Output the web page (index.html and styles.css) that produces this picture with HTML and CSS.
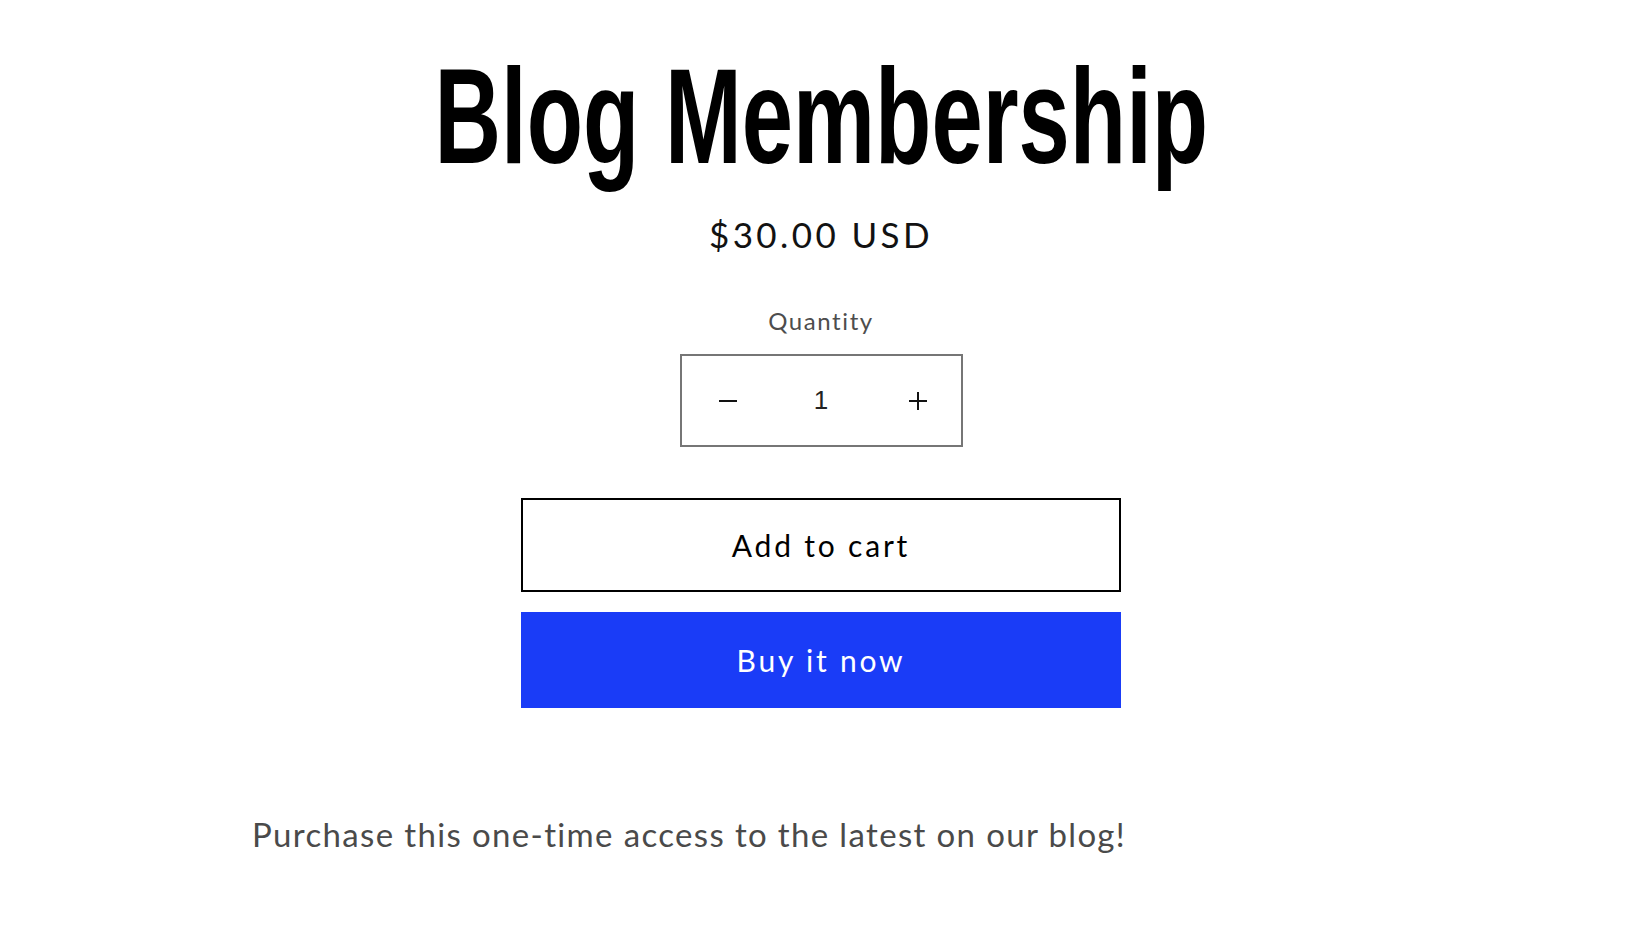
FILE: index.html
```html
<!DOCTYPE html>
<html lang="en">
<head>
<meta charset="utf-8">
<title>Blog Membership</title>
<link rel="stylesheet" href="styles.css">
</head>
<body>
<main class="page">
  <section class="product">
    <h1 class="product-title">Blog Membership</h1>
    <p class="price">$30.00 USD</p>
    <label class="qty-label" for="qty">Quantity</label>
    <div class="qty">
      <button class="qty-btn" type="button" aria-label="Decrease quantity">
        <svg width="18" height="18" viewBox="0 0 18 18"><path d="M0 9h18" stroke="#121212" stroke-width="2"/></svg>
      </button>
      <input class="qty-input" id="qty" type="text" value="1">
      <button class="qty-btn" type="button" aria-label="Increase quantity">
        <svg width="18" height="18" viewBox="0 0 18 18"><path d="M0 9h18M9 0v18" stroke="#121212" stroke-width="2"/></svg>
      </button>
    </div>
    <button class="btn btn-outline" type="button">Add to cart</button>
    <button class="btn btn-solid" type="button">Buy it now</button>
  </section>
  <p class="description">Purchase this one-time access to the latest on our blog!</p>
</main>
</body>
</html>
```

FILE: styles.css
```css
html, body {
  margin: 0;
  padding: 0;
  background: #ffffff;
}

body {
  font-family: Lato, "Open Sans", sans-serif;
  color: #121212;
}

.page {
  padding: 49px 236px 0 252px;
}

.product {
  display: flex;
  flex-direction: column;
  align-items: center;
}

.product-title {
  margin: 0;
  font-family: "Liberation Sans Narrow", "Liberation Sans", Arial, sans-serif;
  font-weight: 700;
  font-size: 135px;
  line-height: 135px;
  color: #000;
  transform: scaleX(0.683);
  white-space: nowrap;
}

.price {
  margin: 29px 0 0;
  font-size: 35px;
  line-height: 42px;
  letter-spacing: 3.4px;
  color: #121212;
}

.qty-label {
  margin-top: 51px;
  font-size: 24px;
  line-height: 29px;
  letter-spacing: 1.6px;
  color: #4d4d4d;
}

.qty {
  margin-top: 19px;
  width: 283px;
  height: 93px;
  box-sizing: border-box;
  border: 2px solid #767676;
  display: grid;
  grid-template-columns: 92px 1fr 92px;
  align-items: center;
}

.qty-btn {
  background: none;
  border: 0;
  padding: 0;
  height: 100%;
  display: flex;
  align-items: center;
  justify-content: center;
}

.qty-btn:last-child {
  padding-left: 6px;
}

.qty-input {
  width: 100%;
  border: 0;
  padding: 0;
  background: none;
  text-align: center;
  font-family: "Liberation Sans", Arial, sans-serif;
  font-size: 26px;
  color: #222;
}

.btn {
  width: 600px;
  box-sizing: border-box;
  font-family: Lato, "Open Sans", sans-serif;
  font-size: 30px;
  letter-spacing: 2.8px;
  cursor: pointer;
}

.btn-outline {
  margin-top: 51px;
  height: 94px;
  background: #fff;
  color: #000;
  border: 2px solid #000;
}

.btn-solid {
  margin-top: 20px;
  height: 96px;
  background: #1a3cf7;
  color: #fff;
  border: 0;
}

.description {
  margin: 106px 0 0;
  font-size: 33px;
  line-height: 40px;
  letter-spacing: 1.35px;
  color: #4a4a4a;
}
```
